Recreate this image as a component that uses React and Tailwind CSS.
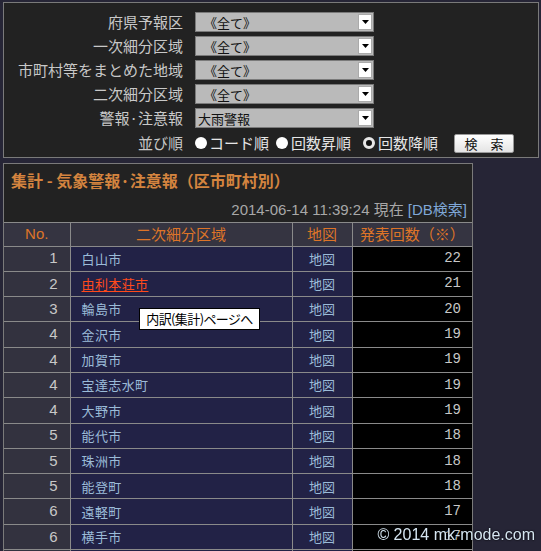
import React from 'react';

const rows = [
  ['1', '白山市', '22'],
  ['2', '由利本荘市', '21'],
  ['3', '輪島市', '20'],
  ['4', '金沢市', '19'],
  ['4', '加賀市', '19'],
  ['4', '宝達志水町', '19'],
  ['4', '大野市', '19'],
  ['5', '能代市', '18'],
  ['5', '珠洲市', '18'],
  ['5', '能登町', '18'],
  ['6', '遠軽町', '17'],
  ['6', '横手市', '17'],
  ['6', '大仙市', '17'],
];

const jp = { fontFamily: '"Noto Sans CJK JP", "Liberation Sans", sans-serif' };
const latin = { fontFamily: '"Liberation Sans", "Noto Sans CJK JP", sans-serif' };

function Select({ value, plain }) {
  return (
    <div className="flex h-[20px] w-[179px] items-center border border-[#7a7a7a] bg-[#bababa]">
      <span className={`flex-1 text-[13px] leading-none text-[#111] ${plain ? 'pl-[2px]' : 'pl-[8px]'}`}>{value}</span>
      <span className="mr-[1px] flex h-[16px] w-[14px] items-center justify-center border border-[#aaa] bg-white">
        <svg width="7" height="4" viewBox="0 0 7 4"><path d="M0 0h7L3.5 4z" fill="#000" /></svg>
      </span>
    </div>
  );
}

function Radio({ checked }) {
  return checked ? (
    <span className="inline-block h-[12px] w-[12px] rounded-full border-[3px] border-[#e8e8e8] bg-[#111]" />
  ) : (
    <span className="inline-block h-[12px] w-[12px] rounded-full bg-white" />
  );
}

export default function App() {
  const labels = [
    ['府県予報区', '《全て》'],
    ['一次細分区域', '《全て》'],
    ['市町村等をまとめた地域', '《全て》'],
    ['二次細分区域', '《全て》'],
    ['警報·注意報', '大雨警報'],
  ];
  return (
    <div className="min-h-screen bg-[#262536] px-[3px] pt-[2px]" style={jp}>
      <div className="h-[156px] w-[536px] border border-[#7a7a7a] bg-[#222222] pt-[9px]">
        <div className="grid grid-cols-[179px_auto] gap-x-[12px] gap-y-[4px]">
          {labels.map(([l, v]) => (
            <React.Fragment key={l}>
              <div className="h-[20px] text-right text-[15px] leading-[20px] text-[#c8c8c8]">{l}</div>
              <Select value={v} plain={v === '大雨警報'} />
            </React.Fragment>
          ))}
          <div className="mt-[1px] h-[20px] text-right text-[15px] leading-[20px] text-[#c8c8c8]">並び順</div>
          <div className="mt-[1px] flex h-[20px] items-center text-[15px] text-[#e6e6e6]">
            <span className="flex items-center gap-[2px]"><Radio /><span>コード順</span></span>
            <span className="ml-[7px] flex items-center gap-[3px]"><Radio /><span>回数昇順</span></span>
            <span className="ml-[12px] flex items-center gap-[3px]"><Radio checked /><span>回数降順</span></span>
            <button className="ml-[16px] h-[19px] w-[60px] rounded-[2px] border border-[#999] bg-gradient-to-b from-white to-[#e4e4e4] text-[13px] leading-none text-[#111]">
              検　索
            </button>
          </div>
        </div>
      </div>

      <div className="mt-[5px] w-[470px] border border-[#7a7a7a] bg-[#222222]">
        <div className="h-[35px] whitespace-nowrap pl-[7px] pt-[6px] text-[16px] font-bold leading-[20px] text-[#d4843f]">
          集計 - 気象警報·注意報（区市町村別）
        </div>
        <div className="h-[23px] pr-[5px] text-right text-[15px] leading-[22px] text-[#a8a8a8]" style={latin}>
          2014-06-14 11:39:24 現在 <span className="text-[#7fa7d6]">[DB検索]</span>
        </div>
        <table className="w-full table-fixed border-collapse">
          <colgroup>
            <col className="w-[66px]" />
            <col className="w-[222px]" />
            <col className="w-[60px]" />
            <col />
          </colgroup>
          <thead>
            <tr className="h-[22px] bg-[#353441] text-[15px] text-[#de7428]">
              <th className="border-y border-r border-[#8a8a8a] font-normal" style={latin}>No.</th>
              <th className="border border-[#8a8a8a] font-normal">二次細分区域</th>
              <th className="border border-[#8a8a8a] font-normal">地図</th>
              <th className="border-y border-l border-[#8a8a8a] font-normal">発表回数（※）</th>
            </tr>
          </thead>
          <tbody>
            {rows.map(([n, name, c], i) => (
              <tr key={i} className="h-[25.3px]">
                <td className="border-y border-r border-[#8a8a8a] bg-[#33323f] pr-[12px] text-right text-[15px] text-[#c8c8c8]" style={latin}>{n}</td>
                <td className="border border-[#8a8a8a] bg-[#222246] pl-[11px] text-[13px] tracking-[0.4px]">
                  {i === 1 ? (
                    <span className="text-[#ff4a1c] underline underline-offset-2">{name}</span>
                  ) : (
                    <span className="text-[#9bbbd8]">{name}</span>
                  )}
                </td>
                <td className="border border-[#8a8a8a] bg-[#222246] text-center text-[13px] text-[#9bbbd8]">地図</td>
                <td className="border-y border-l border-[#8a8a8a] bg-black pr-[11px] text-right text-[14px] text-[#c8c8c8]" style={{ fontFamily: '"Liberation Mono", monospace' }}>{c}</td>
              </tr>
            ))}
          </tbody>
        </table>
      </div>

      <div className="absolute left-[139px] top-[308px] flex h-[22px] w-[121px] items-center justify-center whitespace-nowrap border border-black bg-white text-[13px] tracking-[-0.6px] text-black">
        内訳(集計)ページへ
      </div>

      <div
        className="fixed bottom-[8px] right-[6px] text-[16px] leading-none text-[#d6e6f2]"
        style={{ ...latin, textShadow: '0 0 2px #000, 0 0 1px #000' }}
      >
        © 2014 mk-mode.com
      </div>
    </div>
  );
}
